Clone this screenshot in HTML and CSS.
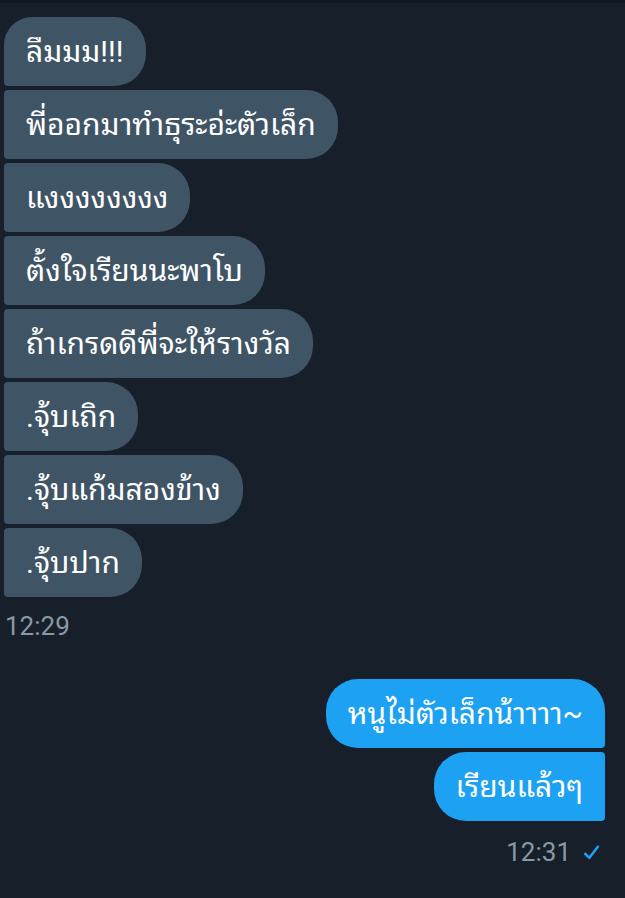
FILE: index.html
```html
<!DOCTYPE html>
<html lang="th">
<head>
<meta charset="utf-8">
<link rel="stylesheet" href="styles.css">
</head>
<body>
<div class="topbar"></div>
<main class="chat">
  <section class="group received">
    <div class="bubble first">ลืมมม!!!</div>
    <div class="bubble">พี่ออกมาทำธุระอ่ะตัวเล็ก</div>
    <div class="bubble">แงงงงงงงง</div>
    <div class="bubble">ตั้งใจเรียนนะพาโบ</div>
    <div class="bubble">ถ้าเกรดดีพี่จะให้รางวัล</div>
    <div class="bubble">.จุ้บเถิก</div>
    <div class="bubble">.จุ้บแก้มสองข้าง</div>
    <div class="bubble last">.จุ้บปาก</div>
    <div class="meta">12:29</div>
  </section>
  <section class="group sent">
    <div class="bubble first">หนูไม่ตัวเล็กน้าาาา~</div>
    <div class="bubble">เรียนแล้วๆ</div>
    <div class="meta">12:31
      <svg class="check" viewBox="0 0 16 16" width="16" height="16"><path d="M2 9.2 L6 13 L14 2.5" fill="none" stroke="#1da1f2" stroke-width="2.4" stroke-linecap="round" stroke-linejoin="round"/></svg>
    </div>
  </section>
</main>
</body>
</html>
```
FILE: styles.css
```css
html, body {
  margin: 0;
  padding: 0;
  background: #17202a;
  height: 100%;
}
body {
  font-family: Roboto, "Noto Sans Thai Looped", sans-serif;
  color: #ffffff;
}
.topbar {
  height: 3px;
  background: #111920;
}
.chat {
  display: flex;
  flex-direction: column;
  padding-top: 14px;
}
.group {
  display: flex;
  flex-direction: column;
  gap: 4px;
}
.received {
  align-items: flex-start;
  padding-left: 4px;
}
.sent {
  align-items: flex-end;
  padding-right: 20px;
  margin-top: 38px;
}
.bubble {
  height: 69px;
  line-height: 69px;
  padding: 0 22px;
  font-size: 30px;
  white-space: nowrap;
  box-sizing: border-box;
}
.received .bubble {
  background: #3f5566;
  border-radius: 4px 32px 32px 4px;
}
.received .bubble.first {
  border-radius: 28px 32px 32px 4px;
}
.sent .bubble {
  background: #1da1f2;
  border-radius: 32px 4px 4px 32px;
}
.sent .bubble.first {
  border-radius: 32px 32px 4px 32px;
}
.meta {
  font-family: Roboto, "Liberation Sans", sans-serif;
  font-size: 26px;
  color: #8899a6;
  display: flex;
  align-items: center;
  gap: 12px;
  margin-top: 10px;
}
.received .meta {
  padding-left: 1px;
}
.sent .meta {
  margin-top: 12px;
  padding-right: 5px;
}
.check {
  width: 17px;
  height: 17px;
}
```
